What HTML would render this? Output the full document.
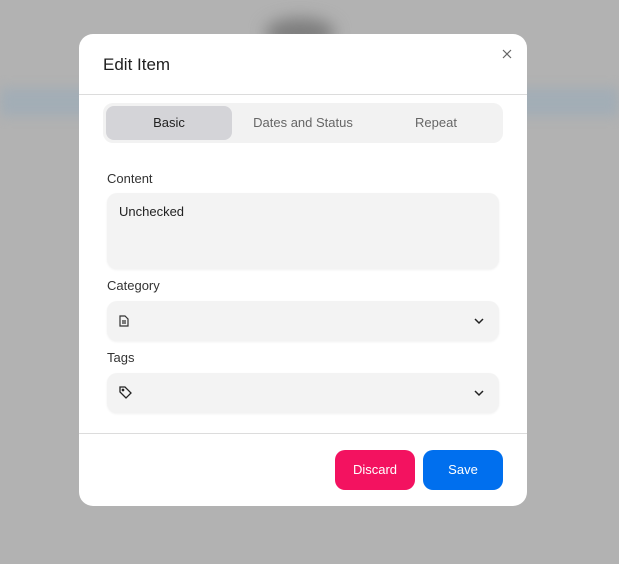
<!DOCTYPE html>
<html><head><style>
body{margin:0;width:619px;height:564px;overflow:hidden;background:#b2b2b2;font-family:"Liberation Sans",sans-serif;position:relative}
.band{position:absolute;left:0;right:0;top:88px;height:28px;background:#a2adb6;filter:blur(6px)}
.blob{position:absolute;left:265px;top:18px;width:70px;height:30px;background:#7d7d7d;border-radius:50%;filter:blur(8px)}
.modal{position:absolute;left:79px;top:34px;width:448px;height:472px;background:#fff;border-radius:14px}
.title{position:absolute;left:24px;top:21px;font-size:17px;color:#1f1f1f}
.hr{position:absolute;left:0;right:0;height:1px;background:#dcdcdc}
.tabs{position:absolute;left:24px;top:69px;width:400px;height:40px;background:#f2f2f2;border-radius:10px}
.tab{position:absolute;top:3px;height:34px;line-height:34px;text-align:center;font-size:13px;color:#666}
.act{background:#d4d4d8;border-radius:8px;color:#222}
.lbl{position:absolute;left:28px;font-size:13px;color:#333}
.field{position:absolute;left:28px;width:392px;background:#f3f3f3;border-radius:10px;box-shadow:0 1px 2px rgba(0,0,0,.06)}
.chev{position:absolute;right:14px;top:14px}
.btn{position:absolute;top:416px;width:80px;height:40px;border-radius:10px;color:#fff;font-size:13px;text-align:center;line-height:40px}
</style></head><body>
<div class="band"></div><div class="blob"></div>
<div class="modal">
<div class="title">Edit Item</div>
<svg style="position:absolute;left:423px;top:15px" width="10" height="10" viewBox="0 0 10 10" stroke="#666" stroke-width="1.2"><path d="M1 1l8 8M9 1l-8 8"/></svg>
<div class="hr" style="top:60px"></div>
<div class="tabs">
<div class="tab act" style="left:3px;width:126px">Basic</div>
<div class="tab" style="left:135px;width:130px">Dates and Status</div>
<div class="tab" style="left:268px;width:130px">Repeat</div>
</div>
<div class="lbl" style="top:137px">Content</div>
<div class="field" style="top:159px;height:76px"><div style="position:absolute;left:12px;top:11px;font-size:13px;color:#222">Unchecked</div></div>
<div class="lbl" style="top:244px">Category</div>
<div class="field" style="top:267px;height:40px">
<svg style="position:absolute;left:12px;top:14px" width="10" height="12" viewBox="0 0 10 12" fill="none" stroke="#333" stroke-width="1.2"><path d="M1 1h5l3 3v7H1z M3 6h4 M3 8h4"/></svg>
<svg class="chev" width="12" height="12" viewBox="0 0 12 12" fill="none" stroke="#222" stroke-width="1.5"><path d="M2 4l4 4 4-4"/></svg></div>
<div class="lbl" style="top:316px">Tags</div>
<div class="field" style="top:339px;height:40px">
<svg style="position:absolute;left:12px;top:13px" width="13" height="13" viewBox="0 0 13 13" fill="none" stroke="#222" stroke-width="1.3"><path d="M1 1h5l6 6-5 5-6-6z"/><circle cx="4" cy="4" r=".7" fill="#222"/></svg>
<svg class="chev" width="12" height="12" viewBox="0 0 12 12" fill="none" stroke="#222" stroke-width="1.5"><path d="M2 4l4 4 4-4"/></svg></div>
<div class="hr" style="top:399px"></div>
<div class="btn" style="left:256px;background:#f31260">Discard</div>
<div class="btn" style="left:344px;background:#006fee">Save</div>
</div>
</body></html>
